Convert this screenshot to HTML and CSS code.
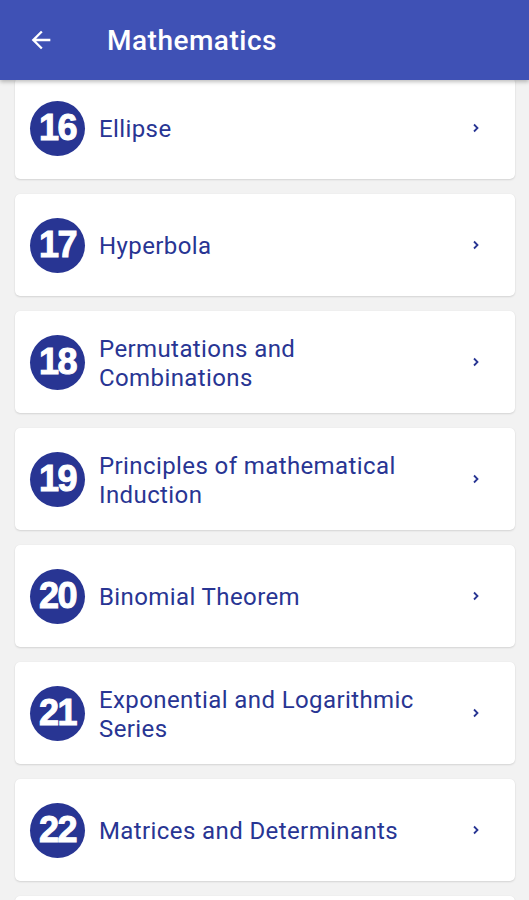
FILE: index.html
```html
<!DOCTYPE html>
<html>
<head>
<meta charset="utf-8">
<link rel="stylesheet" href="styles.css">
</head>
<body>
<header class="appbar">
  <svg class="back" width="24" height="24" viewBox="0 0 24 24"><path d="M20 11H7.83l5.59-5.59L12 4l-8 8 8 8 1.41-1.41L7.83 13H20v-2z" fill="#fff"/></svg>
  <h1 class="title">Mathematics</h1>
</header>
<main class="list">
  <div class="card first"><span class="num">16</span><span class="label">Ellipse</span><svg class="chev" viewBox="0 0 8 10"><path d="M2 1.5L5.5 5 2 8.5" fill="none" stroke="#283593" stroke-width="1.8"/></svg></div>
  <div class="card"><span class="num">17</span><span class="label">Hyperbola</span><svg class="chev" viewBox="0 0 8 10"><path d="M2 1.5L5.5 5 2 8.5" fill="none" stroke="#283593" stroke-width="1.8"/></svg></div>
  <div class="card"><span class="num">18</span><span class="label">Permutations and<br>Combinations</span><svg class="chev" viewBox="0 0 8 10"><path d="M2 1.5L5.5 5 2 8.5" fill="none" stroke="#283593" stroke-width="1.8"/></svg></div>
  <div class="card"><span class="num">19</span><span class="label">Principles of mathematical<br>Induction</span><svg class="chev" viewBox="0 0 8 10"><path d="M2 1.5L5.5 5 2 8.5" fill="none" stroke="#283593" stroke-width="1.8"/></svg></div>
  <div class="card"><span class="num">20</span><span class="label">Binomial Theorem</span><svg class="chev" viewBox="0 0 8 10"><path d="M2 1.5L5.5 5 2 8.5" fill="none" stroke="#283593" stroke-width="1.8"/></svg></div>
  <div class="card"><span class="num">21</span><span class="label">Exponential and Logarithmic<br>Series</span><svg class="chev" viewBox="0 0 8 10"><path d="M2 1.5L5.5 5 2 8.5" fill="none" stroke="#283593" stroke-width="1.8"/></svg></div>
  <div class="card"><span class="num">22</span><span class="label">Matrices and Determinants</span><svg class="chev" viewBox="0 0 8 10"><path d="M2 1.5L5.5 5 2 8.5" fill="none" stroke="#283593" stroke-width="1.8"/></svg></div>
  <div class="card"></div>
</main>
</body>
</html>
```
FILE: styles.css
```css
html, body {
  margin: 0;
  padding: 0;
  height: 900px;
  overflow: hidden;
  background: #f2f2f2;
  font-family: Roboto, "Liberation Sans", sans-serif;
}
.appbar {
  position: relative;
  z-index: 2;
  height: 80px;
  background: #3f51b5;
  display: flex;
  align-items: center;
  box-shadow: 0 2px 4px rgba(0,0,0,0.25);
}
.back {
  width: 28px;
  height: 28px;
  margin-left: 27px;
}
.title {
  margin: 0 0 0 52px;
  color: #fff;
  font-size: 28px;
  font-weight: 500;
  letter-spacing: 0.5px;
}
.list {
  display: flex;
  flex-direction: column;
  gap: 15px;
  padding: 0 14px 0 15px;
}
.card {
  flex: none;
  height: 102px;
  background: #fff;
  border-radius: 5px;
  box-shadow: 0 1px 2px rgba(0,0,0,0.12), 0 0 1px rgba(0,0,0,0.08);
  display: flex;
  align-items: center;
  padding: 0 15px;
}
.first {
  margin-top: -3px;
}
.num {
  flex: none;
  width: 55px;
  height: 55px;
  border-radius: 50%;
  background: #283593;
  color: #fff;
  display: flex;
  align-items: center;
  justify-content: center;
  font-family: "Liberation Sans", Arial, sans-serif;
  font-weight: 700;
  font-size: 36px;
  letter-spacing: -1.5px;
  -webkit-text-stroke: 1px #fff;
}
.label {
  flex: 1;
  margin-left: 14px;
  padding-top: 3px;
  color: #283593;
  font-size: 24px;
  line-height: 29px;
  letter-spacing: 0.4px;
}
.chev {
  flex: none;
  width: 8px;
  height: 10px;
  margin-right: 20px;
}
```
